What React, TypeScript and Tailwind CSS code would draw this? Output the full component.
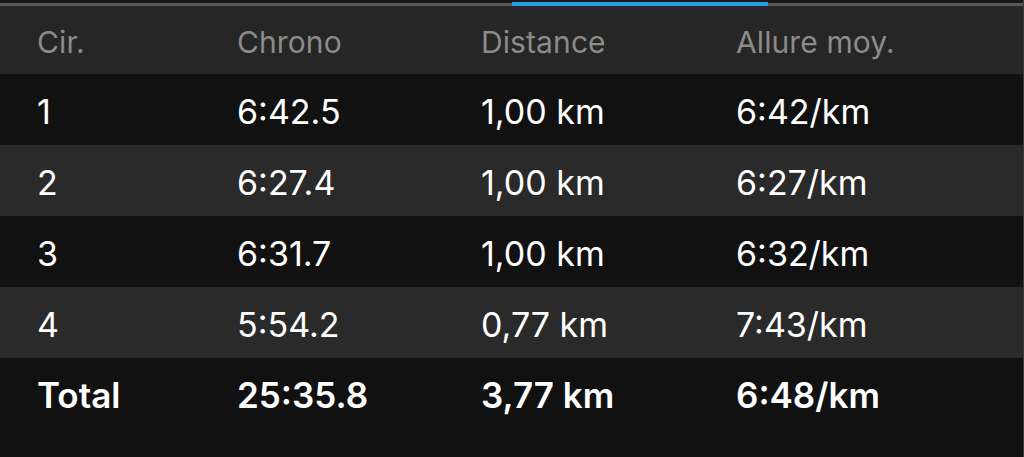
const laps = [
  { lap: '1', time: '6:42.5', dist: '1,00 km', pace: '6:42/km' },
  { lap: '2', time: '6:27.4', dist: '1,00 km', pace: '6:27/km' },
  { lap: '3', time: '6:31.7', dist: '1,00 km', pace: '6:32/km' },
  { lap: '4', time: '5:54.2', dist: '0,77 km', pace: '7:43/km' },
];

const cols = 'grid grid-cols-[200px_244px_255px_1fr] pl-[37px] items-center';

export default function App() {
  return (
    <div className="h-[457px] w-[1024px] overflow-hidden bg-[#111111] border-r border-[#3a3a3a] font-['Inter','Helvetica_Neue','Liberation_Sans',sans-serif]">
      <div className="flex h-[6px] flex-col bg-[#181818]">
        <div className="h-[3px]" />
        <div className="flex h-[3px]">
          <div className="w-[512px] bg-[#5a5a5a]" />
          <div className="-mt-[1px] h-[4px] w-[256px] bg-[#2d9be0]" />
          <div className="flex-1 bg-[#5a5a5a]" />
        </div>
      </div>
      <div className={`${cols} h-[68px] bg-[#262626] pt-[4px] text-[30px] tracking-[0.1px] text-[#8b8b8b]`}>
        <span>Cir.</span>
        <span>Chrono</span>
        <span>Distance</span>
        <span>Allure moy.</span>
      </div>
      {laps.map((l, i) => (
        <div key={l.lap} className={`${cols} h-[71px] pt-[3px] text-[34px] text-white ${i % 2 ? 'bg-[#2a2a2a]' : 'bg-[#111111]'}`}>
          <span>{l.lap}</span>
          <span>{l.time}</span>
          <span>{l.dist}</span>
          <span>{l.pace}</span>
        </div>
      ))}
      <div className={`${cols} h-[72px] pt-[2px] text-[35px] font-semibold text-white`}>
        <span>Total</span>
        <span>25:35.8</span>
        <span>3,77 km</span>
        <span>6:48/km</span>
      </div>
    </div>
  );
}
